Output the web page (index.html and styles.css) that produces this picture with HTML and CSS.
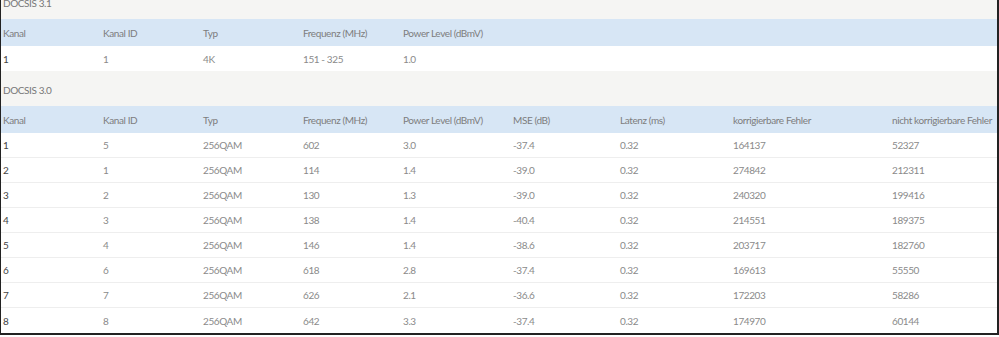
FILE: index.html
```html
<!DOCTYPE html>
<html lang="de">
<head>
  <meta charset="UTF-8">
  <title>DOCSIS Status</title>
  <link rel="stylesheet" href="styles.css">
</head>
<body>
  <div class="frame">
    <div class="caption">DOCSIS 3.1</div>
    <table class="chan">
      <colgroup>
        <col class="c1"><col class="c2"><col class="c3"><col class="c4"><col class="c5">
        <col class="c6"><col class="c7"><col class="c8"><col class="c9">
      </colgroup>
      <thead>
        <tr><th>Kanal</th><th>Kanal ID</th><th>Typ</th><th>Frequenz (MHz)</th><th>Power Level (dBmV)</th><th></th><th></th><th></th><th></th></tr>
      </thead>
      <tbody>
        <tr class="last"><td>1</td><td>1</td><td>4K</td><td>151 - 325</td><td>1.0</td><td></td><td></td><td></td><td></td></tr>
      </tbody>
    </table>

    <div class="caption">DOCSIS 3.0</div>
    <table class="chan">
      <colgroup>
        <col class="c1"><col class="c2"><col class="c3"><col class="c4"><col class="c5">
        <col class="c6"><col class="c7"><col class="c8"><col class="c9">
      </colgroup>
      <thead>
        <tr><th>Kanal</th><th>Kanal ID</th><th>Typ</th><th>Frequenz (MHz)</th><th>Power Level (dBmV)</th><th>MSE (dB)</th><th>Latenz (ms)</th><th>korrigierbare Fehler</th><th>nicht korrigierbare Fehler</th></tr>
      </thead>
      <tbody>
        <tr><td>1</td><td>5</td><td>256QAM</td><td>602</td><td>3.0</td><td>-37.4</td><td>0.32</td><td>164137</td><td>52327</td></tr>
        <tr><td>2</td><td>1</td><td>256QAM</td><td>114</td><td>1.4</td><td>-39.0</td><td>0.32</td><td>274842</td><td>212311</td></tr>
        <tr><td>3</td><td>2</td><td>256QAM</td><td>130</td><td>1.3</td><td>-39.0</td><td>0.32</td><td>240320</td><td>199416</td></tr>
        <tr><td>4</td><td>3</td><td>256QAM</td><td>138</td><td>1.4</td><td>-40.4</td><td>0.32</td><td>214551</td><td>189375</td></tr>
        <tr><td>5</td><td>4</td><td>256QAM</td><td>146</td><td>1.4</td><td>-38.6</td><td>0.32</td><td>203717</td><td>182760</td></tr>
        <tr><td>6</td><td>6</td><td>256QAM</td><td>618</td><td>2.8</td><td>-37.4</td><td>0.32</td><td>169613</td><td>55550</td></tr>
        <tr><td>7</td><td>7</td><td>256QAM</td><td>626</td><td>2.1</td><td>-36.6</td><td>0.32</td><td>172203</td><td>58286</td></tr>
        <tr class="last"><td>8</td><td>8</td><td>256QAM</td><td>642</td><td>3.3</td><td>-37.4</td><td>0.32</td><td>174970</td><td>60144</td></tr>
      </tbody>
    </table>
  </div>
</body>
</html>
```

FILE: styles.css
```css
body { margin: 0; background: #fff; font-family: Lato, sans-serif; font-size: 10px; letter-spacing: -0.4px; color: #8a8a8a; overflow: hidden; }
.frame { width: 996px; margin-top: -16px; background: #f5f5f3; border-left: 1px solid #222; border-right: 2px solid #222; border-bottom: 2px solid #222; }
.caption { height: 35px; line-height: 38px; padding-left: 2px; color: #777; }
.chan { width: 100%; border-collapse: collapse; table-layout: fixed; background: #fff; }
.chan th { background: #d7e6f5; height: 27px; padding: 0 0 0 2px; text-align: left; font-weight: normal; color: #7d7d7d; white-space: nowrap; }
.chan td { height: 24px; padding: 0 0 0 2px; border-bottom: 1px solid #eeeeee; }
.chan tr.last td { border-bottom: none; height: 25px; }
.chan td:first-child { color: #444; }
.c1, .c2, .c3, .c4 { width: 100px; }
.c5 { width: 110px; }
.c6 { width: 107px; }
.c7 { width: 113px; }
.c8 { width: 159px; }
```
